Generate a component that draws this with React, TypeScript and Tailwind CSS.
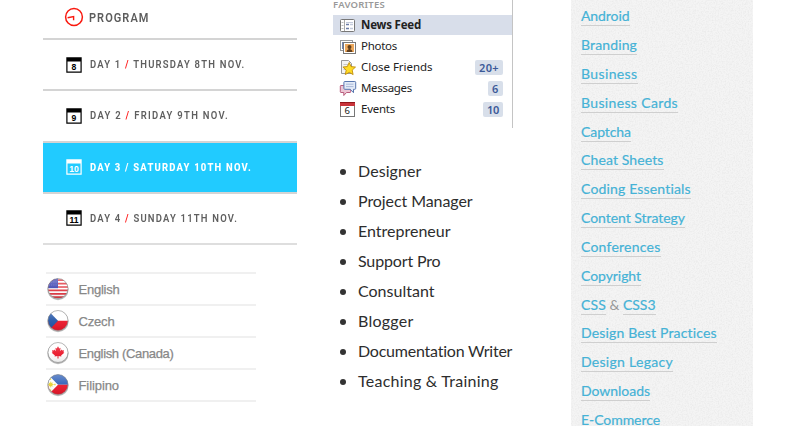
import { useLayoutEffect, useRef, useState, type ReactNode } from "react";

/** Text whose tracking is adjusted so that it fills a given measure. */
function Fit({ w, squeeze = 1, className = "", children }: { w: number; squeeze?: number; className?: string; children: ReactNode }) {
  const ref = useRef<HTMLSpanElement>(null);
  const [spacing, setSpacing] = useState(0);
  useLayoutEffect(() => {
    const el = ref.current;
    if (!el) return;
    el.style.letterSpacing = "0px";
    const natural = el.getBoundingClientRect().width;
    const next = (w - natural) / (el.textContent?.length || 1) / squeeze;
    el.style.letterSpacing = `${next}px`;
    setSpacing(next);
  }, [w, squeeze]);
  return (
    <span ref={ref} className={`inline-block whitespace-pre ${className}`} style={{ letterSpacing: `${spacing}px` }}>
      {children}
    </span>
  );
}

const days = [
  { n: 8, day: "DAY 1", rest: "THURSDAY 8TH NOV.", w: 155.5 },
  { n: 9, day: "DAY 2", rest: "FRIDAY 9TH NOV.", w: 139 },
  { n: 10, day: "DAY 3", rest: "SATURDAY 10TH NOV.", w: 162, active: true },
  { n: 11, day: "DAY 4", rest: "SUNDAY 11TH NOV.", w: 148 },
];

function DayIcon({ n, active }: { n: number; active?: boolean }) {
  return (
    <svg width="16" height="16" viewBox="0 0 16 16" className="shrink-0">
      <path fill={active ? "#fff" : "#000"} fillRule="evenodd" d="M.3 .2h15.4v15.6H.3zM1.5 4.6v10h13v-10z" />
      <text x="8" y="12.6" textAnchor="middle" fontSize="8.6" fontWeight="700" fontFamily="Liberation Sans, sans-serif" fill={active ? "#fff" : "#000"}>
        {n}
      </text>
    </svg>
  );
}

function Program() {
  return (
    <section className="w-[254px] font-['Roboto',sans-serif]">
      <div className="flex h-[38px] items-center pl-[21px]">
        <svg width="20" height="20" viewBox="0 0 20 20" fill="none" stroke="#f9190f" className="mt-[-4px]">
          <circle cx="10" cy="10" r="8.4" strokeWidth="1.5" />
          <path d="M3.6 10.7l6-1.2v3.700" strokeWidth="1.4" />
        </svg>
        <Fit w={60.5} squeeze={0.88} className="mt-[-3px] ml-[5px] origin-left scale-x-[0.88] text-[12.5px] leading-4 font-semibold text-[#5c5c5c]">PROGRAM</Fit>
      </div>
      {days.map((d) => (
        <div
          key={d.n}
          className={`flex h-[51.25px] items-center border-t-2 border-[#d4d4d4] pl-[23px] ${d.active ? "bg-[#21cbff] text-white" : "text-[#5f5f5f]"}`}
        >
          <DayIcon n={d.n} active={d.active} />
          <Fit w={d.w} squeeze={0.86} className={`mt-[1px] ml-[8px] origin-left scale-x-[0.86] text-[11px] leading-4 ${d.active ? "font-extrabold" : "font-semibold"}`}>
            {d.day} <span className={d.active ? "" : "text-[#ff1a1a]"}>/</span> {d.rest}
          </Fit>
        </div>
      ))}
      <div className="h-[2px] bg-[#dedede]" />
    </section>
  );
}

function Flag({ kind }: { kind: string }) {
  return (
    <svg width="24" height="24" viewBox="0 0 24 24" className="shrink-0">
      <defs>
        <clipPath id={`c-${kind}`}><circle cx="12" cy="11.5" r="10" /></clipPath>
        <linearGradient id={`g-${kind}`} x1="0" y1="0" x2="0" y2="1">
          <stop offset="0" stopColor="#fff" stopOpacity=".35" />
          <stop offset=".5" stopColor="#fff" stopOpacity=".08" />
          <stop offset="1" stopColor="#000" stopOpacity=".12" />
        </linearGradient>
      </defs>
      <circle cx="12" cy="12.6" r="10.6" fill="#000" opacity=".28" />
      <g clipPath={`url(#c-${kind})`}>
        <rect width="24" height="24" fill="#fff" />
        {kind === "us" && (
          <>
            <path d="M0 3.2h24M0 6.6h24M0 10h24M0 13.4h24M0 16.8h24M0 20.2h24" stroke="#e0323c" strokeWidth="1.7" />
            <rect width="12" height="11.2" fill="#3b41b0" />
            <path d="M3 5h8M3 8h8" stroke="#8b90da" strokeWidth=".6" strokeDasharray="1 1.2" />
          </>
        )}
        {kind === "cz" && (
          <>
            <path d="M0 11.7h24V24H0z" fill="#ea1023" />
            <path d="M0 0L4 3.5L12 11.7L4 20L0 24z" fill="#1b4fa4" />
          </>
        )}
        {kind === "ca" && (
          <path d="M12 5.2l1.3 2.3 1.3-.7-.5 3.3 1.8-1.6.4 1 1.8-.2-.7 1.9.9.6-3.2 2.6.3 1-2.9-.3v2.5h-1v-2.5l-2.9.3.3-1-3.2-2.6.9-.6-.7-1.9 1.8.2.4-1 1.8 1.6-.5-3.3 1.3.7z" fill="#ea1023" />
        )}
        {kind === "ph" && (
          <>
            <path d="M0 0h24v11.7H0z" fill="#2458b4" />
            <path d="M0 11.7h24V24H0z" fill="#ea1023" />
            <path d="M0 0L3.5 3L12 11.7L3.5 20.5L0 24z" fill="#fff" />
            <circle cx="4.7" cy="11.5" r="2" fill="#e7d02c" />
            <path d="M4.7 8.5v6M1.8 11.5h6M2.6 9.4l4.2 4.2M6.8 9.4l-4.2 4.2" stroke="#e7d02c" strokeWidth=".7" />
            <path d="M8.2 11.5h1.4M4.5 5.5v1.4M4.5 16.5v1.4" stroke="#e7d02c" strokeWidth="1.3" />
          </>
        )}
        <rect width="24" height="24" fill={`url(#g-${kind})`} />
      </g>
      <circle cx="12" cy="11.5" r="10" fill="none" stroke="#777" strokeOpacity=".65" strokeWidth=".8" />
    </svg>
  );
}

const languages = [
  { k: "us", t: "English", w: 41 },
  { k: "cz", t: "Czech", w: 36 },
  { k: "ca", t: "English (Canada)", w: 95 },
  { k: "ph", t: "Filipino", w: 40.5 },
];

function Languages() {
  return (
    <section className="mt-[27px] ml-[3px] w-[210px] border-b-2 border-[#f0f0f0] font-['Liberation_Sans',Arial,sans-serif]">
      {languages.map((l) => (
        <div key={l.k} className="flex h-8 items-center border-t-2 border-[#f0f0f0]">
          <Flag kind={l.k} />
          <Fit w={l.w} className="mt-[1px] ml-[8.5px] text-[13px] leading-4 text-[#888] [-webkit-text-stroke:0.25px_#888]">{l.t}</Fit>
        </div>
      ))}
    </section>
  );
}

function FavIcon({ kind }: { kind: string }) {
  return (
    <svg width="18" height="17" viewBox="0 0 18 17" className="shrink-0">
      {kind === "feed" && (
        <>
          <rect x="1.5" y="2.5" width="14" height="12" rx="1" fill="#fff" stroke="#777" />
          <path d="M5.500 3v11" stroke="#aaa" />
          <path d="M2.500 5.500h2M2.500 8.500h2M2.500 11.500h2" stroke="#bbb" />
          <path d="M7 5.500h7" stroke="#c3cadb" strokeWidth="1" />
          <path d="M7 7.500h3M7 11.500h3" stroke="#6c7ca6" strokeWidth="1.500" />
          <path d="M11 7.500h3M11 11.500h3" stroke="#c3cadb" strokeWidth="1.500" />
        </>
      )}
      {kind === "photos" && (
        <>
          <rect x="1.500" y="2.500" width="12" height="10" fill="#fff" stroke="#999" />
          <rect x="3" y="4" width="9" height="7" fill="#7186b5" />
          <rect x="4.500" y="4.500" width="12" height="11" fill="#fff" stroke="#777" />
          <rect x="6" y="6" width="9" height="8" fill="#eda85c" />
          <circle cx="10.500" cy="9" r="2" fill="#62401f" />
          <path d="M7.500 14c.2-2 1.300-2.500 2-2.600v-1h2v1c.8.1 1.800.6 2 2.600z" fill="#62401f" />
        </>
      )}
      {kind === "friends" && (
        <>
          <path d="M2.500 1.500h7l3 3v10h-10z" fill="#f3f3f3" stroke="#999" />
          <path d="M4.500 5.500h5M4.500 8h4M4.500 10.500h3" stroke="#c6c6c6" />
          <path d="M10.200 3.500l1.900 4.100 4.400.5-3.300 3 .9 4.500-3.900-2.300-3.900 2.300.9-4.500-3.300-3 4.400-.5z" fill="#ffdb24" stroke="#c18d09" strokeWidth=".9" />
        </>
      )}
      {kind === "messages" && (
        <>
          <path d="M2 5.500h9a.7.7 0 0 1 .7.7v5.600a.7.700 0 0 1-.7.700H7.500L4.800 15.500v-3H2a.7.700 0 0 1-.7-.7V6.200A.7.700 0 0 1 2 5.500z" fill="#ecc6d4" stroke="#b85d7d" />
          <path d="M5.800 1.500h10a.9.900 0 0 1 .9.900v6a.9.900 0 0 1-.9.900h-1.300v3.400l-3.200-3.400H5.800a.9.900 0 0 1-.9-.9v-6a.9.900 0 0 1 .9-.9z" fill="#e4ebf7" stroke="#5876ae" />
          <path d="M7 4.200h7.500M7 6.600h7.500" stroke="#a9b9d8" />
        </>
      )}
      {kind === "events" && (
        <>
          <rect x="1.500" y="1.500" width="14" height="14" fill="#fff" stroke="#777" />
          <path d="M1 1h15v4H1z" fill="#c8343b" />
          <path d="M1 1.500h15" stroke="#92161c" />
          <text x="8.200" y="13" textAnchor="middle" fontSize="9.500" fontFamily="Noto Sans, sans-serif" fill="#222">6</text>
        </>
      )}
    </svg>
  );
}

const favorites = [
  { k: "feed", t: "News Feed", w: 60, active: true },
  { k: "photos", t: "Photos", w: 36 },
  { k: "friends", t: "Close Friends", w: 71.5, count: "20+", cw: 20 },
  { k: "messages", t: "Messages", w: 51, count: "6", cw: 7 },
  { k: "events", t: "Events", w: 34, count: "10", cw: 12 },
];

function Favorites() {
  return (
    <section className="h-[128px] w-[180px] border-r border-[#c4c4c4] font-['Noto_Sans',sans-serif]">
      <div className="flex h-[15px] items-start">
        <Fit w={52} className="mt-[-2px] text-[9.5px] leading-[14px] font-semibold text-[#999]">FAVORITES</Fit>
      </div>
      {favorites.map((f) => (
        <div key={f.k} className={`flex h-[21px] items-center pr-[9px] pl-[6px] ${f.active ? "border-b border-white bg-[#d8deea] bg-clip-padding" : ""}`}>
          <FavIcon kind={f.k} />
          <Fit w={f.w} className={`ml-[4px] text-[11.5px] leading-4 text-[#222] ${f.active ? "font-bold" : "mt-[-2px]"}`}>{f.t}</Fit>
          {f.count && (
            <span className="ml-auto flex h-[15px] items-center rounded-[2px] bg-[#d8dfea] px-1 text-[11px] font-semibold text-[#3b5998]">
              <Fit w={f.cw ?? 8} className="leading-[15px]">{f.count}</Fit>
            </span>
          )}
        </div>
      ))}
    </section>
  );
}

const roles = [
  { t: "Designer", w: 63.5 },
  { t: "Project Manager", w: 114.5 },
  { t: "Entrepreneur", w: 92.5 },
  { t: "Support Pro", w: 82.5 },
  { t: "Consultant", w: 76.5 },
  { t: "Blogger", w: 55.5 },
  { t: "Documentation Writer", w: 154.5 },
  { t: "Teaching & Training", w: 140.5 },
];

function Roles() {
  return (
    <ul className="mt-[28px] font-['Lato',sans-serif] text-[16px] leading-[30px] text-[#2d2d2d]">
      {roles.map((r) => (
        <li key={r.t} className="flex h-[30px] items-center pl-[7px]">
          <span className="mt-[2px] h-[6px] w-[6px] shrink-0 rounded-full bg-[#333]" />
          <Fit w={r.w} className="ml-[12px]">{r.t}</Fit>
        </li>
      ))}
    </ul>
  );
}

const categories: { t: string; w: number }[][] = [
  [{ t: "Android", w: 48.5 }],
  [{ t: "Branding", w: 56 }],
  [{ t: "Business", w: 56.5 }],
  [{ t: "Business Cards", w: 97 }],
  [{ t: "Captcha", w: 50 }],
  [{ t: "Cheat Sheets", w: 82.5 }],
  [{ t: "Coding Essentials", w: 110 }],
  [{ t: "Content Strategy", w: 104 }],
  [{ t: "Conferences", w: 79.5 }],
  [{ t: "Copyright", w: 60 }],
  [{ t: "CSS", w: 25 }, { t: "CSS3", w: 32.5 }],
  [{ t: "Design Best Practices", w: 136 }],
  [{ t: "Design Legacy", w: 92 }],
  [{ t: "Downloads", w: 69 }],
  [{ t: "E-Commerce", w: 79 }],
];

function Categories() {
  return (
    <aside className="relative h-[426px] w-[182px] overflow-hidden bg-[#f4f4f4] pt-[7.300px] pl-[10px] font-['Lato',sans-serif] text-[14px]">
      <svg className="absolute inset-0 h-full w-full" aria-hidden="true">
        <filter id="paper">
          <feTurbulence type="fractalNoise" baseFrequency="0.7" numOctaves="2" seed="4" />
          <feColorMatrix values="0 0 0 0 0.4  0 0 0 0 0.4  0 0 0 0 0.4  0.5 0 0 0 -0.2" />
        </filter>
        <rect width="100%" height="100%" filter="url(#paper)" opacity=".6" />
      </svg>
      {categories.map((row) => (
        <div key={row[0].t} className="relative flex h-[28.83px] items-start">
          {row.map((c, i) => (
            <span key={c.t} className="flex">
              {i > 0 && <span className="w-[17px] text-center leading-[18px] text-[#999]">&amp;</span>}
              <a className="flex h-[19px] border-b border-[#cfcfcf] text-[#45b2d6]">
                <Fit w={c.w} className="leading-[18px] [-webkit-text-stroke:0.2px_#45b2d6]">{c.t}</Fit>
              </a>
            </span>
          ))}
        </div>
      ))}
    </aside>
  );
}

export default function App() {
  return (
    <main className="flex h-[426px] w-[796px] overflow-hidden bg-white pl-[43px]">
      <div className="w-[290px] shrink-0">
        <Program />
        <Languages />
      </div>
      <div className="w-[238px] shrink-0">
        <Favorites />
        <Roles />
      </div>
      <Categories />
    </main>
  );
}
